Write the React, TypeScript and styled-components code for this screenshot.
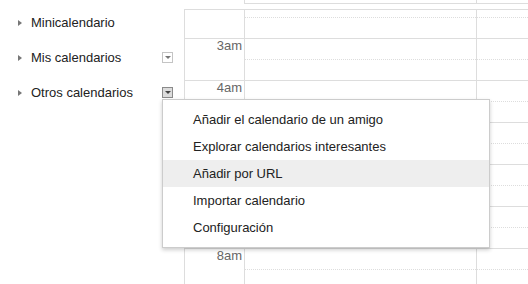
import React from 'react';
import styled, { createGlobalStyle } from 'styled-components';

const GlobalStyle = createGlobalStyle`
  html, body {
    margin: 0;
    padding: 0;
    background: #fff;
    font-family: Arial, "Liberation Sans", sans-serif;
    font-size: 13px;
    color: #222;
  }
`;

const Page = styled.div`
  display: flex;
  width: 528px;
  height: 284px;
  overflow: hidden;
`;

const Sidebar = styled.div`
  width: 184px;
  flex-shrink: 0;
  padding-top: 5px;
  position: relative;
  z-index: 2;
`;

const SectionRow = styled.div`
  height: 35px;
  display: flex;
  align-items: center;
  padding-left: 18px;
  padding-right: 11px;
`;

const Expander = styled.span`
  width: 0;
  height: 0;
  border-left: 4px solid #777;
  border-top: 3.5px solid transparent;
  border-bottom: 3.5px solid transparent;
  margin-right: 9px;
`;

const SectionLabel = styled.span`
  flex: 1;
`;

const MenuAnchor = styled.div`
  position: relative;
  width: 11px;
  height: 11px;
`;

const MenuButton = styled.div<{ $active?: boolean }>`
  box-sizing: border-box;
  width: 11px;
  height: 11px;
  border: 1px solid ${({ $active }) => ($active ? '#8a8a8a' : '#c4c4c4')};
  background: ${({ $active }) => ($active ? '#dcdcdc' : '#fff')};
  display: flex;
  align-items: center;
  justify-content: center;
  &::after {
    content: '';
    width: 0;
    height: 0;
    border-top: 3px solid ${({ $active }) => ($active ? '#444' : '#777')};
    border-left: 3px solid transparent;
    border-right: 3px solid transparent;
  }
`;

const Menu = styled.div`
  position: absolute;
  top: 12px;
  left: 0;
  width: 328px;
  box-sizing: border-box;
  background: #fff;
  border: 1px solid rgba(0, 0, 0, 0.2);
  box-shadow: 0 2px 4px rgba(0, 0, 0, 0.2);
  padding: 6px 0;
  z-index: 10;
`;

const MenuItem = styled.div<{ $hover?: boolean }>`
  height: 27px;
  line-height: 27px;
  padding-left: 30px;
  white-space: nowrap;
  color: #222;
  background: ${({ $hover }) => ($hover ? '#eee' : 'transparent')};
`;

const Calendar = styled.div`
  flex: 1;
  display: flex;
  flex-direction: column;
  min-width: 0;
`;

const HeaderStrip = styled.div`
  height: 3px;
  margin-left: 60px;
  display: flex;
  border-bottom: 1px solid #ddd;
  margin-bottom: 5px;
`;

const HeaderCell = styled.div<{ $width?: number }>`
  border-left: 1px solid #ddd;
  ${({ $width }) => ($width ? `width: ${$width}px;` : 'flex: 1;')}
  flex-shrink: 0;
`;

const Grid = styled.div`
  flex: 1;
  border-top: 1px solid #ddd;
  border-left: 1px solid #ddd;
  overflow: hidden;
`;

const ScrollContent = styled.div`
  margin-top: -14px;
`;

const HourRow = styled.div`
  display: flex;
  height: 42px;
  box-sizing: border-box;
  border-top: 1px solid #ddd;
`;

const TimeCell = styled.div`
  width: 59px;
  flex-shrink: 0;
  text-align: right;
  padding-right: 2px;
  box-sizing: border-box;
  color: #666;
  line-height: 14px;
`;

const DayCell = styled.div<{ $width?: number }>`
  ${({ $width }) => ($width ? `width: ${$width}px;` : 'flex: 1;')}
  flex-shrink: 0;
  border-left: 1px solid #ddd;
  &::before {
    content: '';
    display: block;
    margin-top: 20px;
    border-top: 1px dotted #ddd;
  }
`;

const sections = [
  { label: 'Minicalendario', menu: false },
  { label: 'Mis calendarios', menu: true },
  { label: 'Otros calendarios', menu: true, open: true },
];

const menuItems = [
  'Añadir el calendario de un amigo',
  'Explorar calendarios interesantes',
  'Añadir por URL',
  'Importar calendario',
  'Configuración',
];

const hours = ['', '3am', '4am', '5am', '6am', '7am', '8am', '9am'];

const App = () => {
  return (
    <>
      <GlobalStyle />
      <Page>
        <Sidebar>
          {sections.map((s) => (
            <SectionRow key={s.label}>
              <Expander />
              <SectionLabel>{s.label}</SectionLabel>
              {s.menu && (
                <MenuAnchor>
                  <MenuButton $active={s.open} />
                  {s.open && (
                    <Menu>
                      {menuItems.map((item) => (
                        <MenuItem key={item} $hover={item === 'Añadir por URL'}>
                          {item}
                        </MenuItem>
                      ))}
                    </Menu>
                  )}
                </MenuAnchor>
              )}
            </SectionRow>
          ))}
        </Sidebar>
        <Calendar>
          <HeaderStrip>
            <HeaderCell $width={231} />
            <HeaderCell />
          </HeaderStrip>
          <Grid>
            <ScrollContent>
              {hours.map((h, i) => (
                <HourRow key={i}>
                  <TimeCell>{h}</TimeCell>
                  <DayCell $width={231} />
                  <DayCell />
                </HourRow>
              ))}
            </ScrollContent>
          </Grid>
        </Calendar>
      </Page>
    </>
  );
};

export default App;
